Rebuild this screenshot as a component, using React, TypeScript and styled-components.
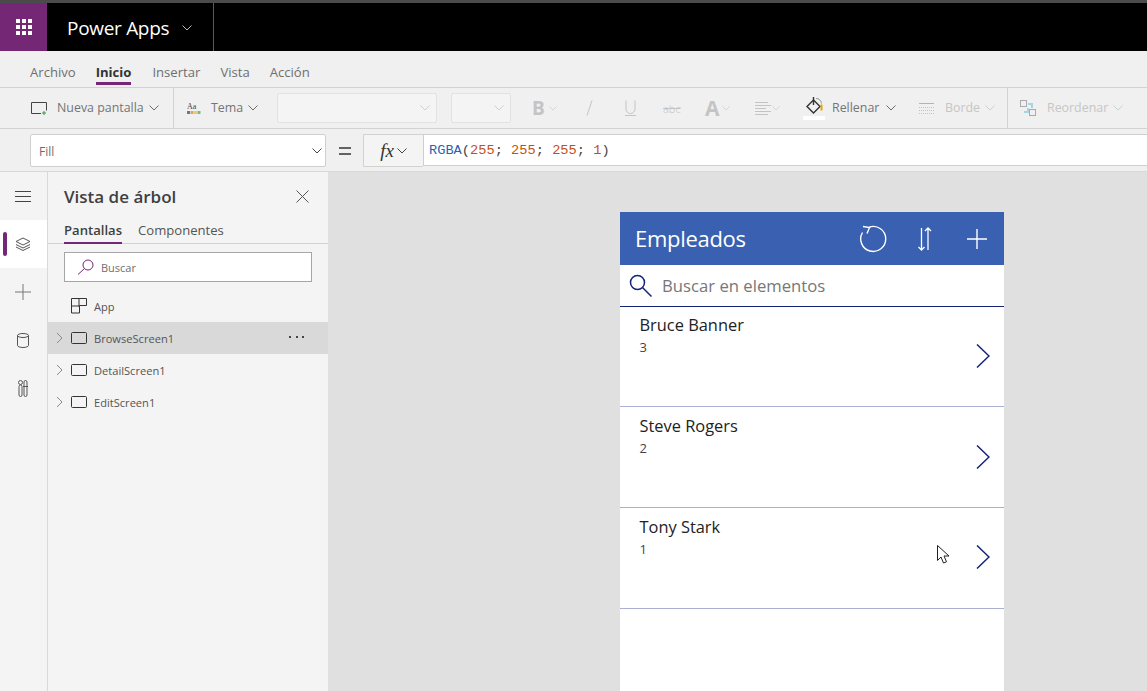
import React from "react";
import styled, { createGlobalStyle } from "styled-components";

const Global = createGlobalStyle`
  html, body { margin: 0; padding: 0; height: 100%; overflow: hidden; background: #e0e0e0; }
  #root { height: 691px; }
  * { box-sizing: border-box; }
  body { font-family: "Open Sans", "Noto Sans", "Liberation Sans", sans-serif; }
`;

const Page = styled.div`
  width: 1147px; height: 691px; display: flex; flex-direction: column; overflow: hidden; position: relative;
`;
const TopBar = styled.header`
  height: 51px; flex: none; background: #000; border-top: 3px solid #4b4b4b; display: flex; align-items: stretch;
`;
const Waffle = styled.div`
  width: 47px; background: #742774; display: flex; align-items: center; justify-content: center;
`;
const Brand = styled.div`
  width: 167px; border-right: 1px solid #5a5a5a; color: #fff; font-size: 19px; padding: 2px 0 0 20px; display: flex; align-items: center; gap: 13px;
  letter-spacing: -0.3px;
`;
const MenuBar = styled.nav`
  height: 37px; flex: none; background: #f0f0f0; border-bottom: 1px solid #d2d2d2; display: flex; align-items: center; padding-left: 30px; gap: 20px;
`;
const MenuItem = styled.div<{ $active?: boolean; $mr?: number }>`
  font-size: 13.1px; display: flex; align-items: center;
  color: ${p => (p.$active ? "#333" : "#6f6f6f")}; font-weight: ${p => (p.$active ? 700 : 400)};
  height: ${p => (p.$active ? "31px" : "100%")};
  padding-top: ${p => (p.$active ? "8px" : "6px")};
  margin-right: ${p => p.$mr ?? 0}px;
  ${p => (p.$active ? "align-self: flex-start; margin-top: 3px; border-bottom: 3px solid #742774;" : "")}
`;
const Toolbar = styled.div`
  height: 41px; flex: none; background: #f0f0f0; border-bottom: 1px solid #d2d2d2; display: flex; align-items: center; font-size: 12.4px;
`;
const ToolButton = styled.div<{ $w: number; $dim?: boolean; $pl?: number; $gap?: number; $divider?: boolean }>`
  width: ${p => p.$w}px; height: 100%; display: flex; align-items: center; flex: none;
  padding-left: ${p => p.$pl ?? 0}px; gap: ${p => p.$gap ?? 5}px;
  color: ${p => (p.$dim ? "#c6c6c6" : "#757575")};
  ${p => (p.$divider ? "border-right: 1px solid #d2d2d2;" : "")}
`;
const ToolLabel = styled.span`padding-bottom: 2px;`;
const ToolIconSlot = styled.span<{ $mr: number }>`display: flex; margin-right: ${p => p.$mr}px;`;
const Combo = styled.div<{ $w: number; $ml: number }>`
  width: ${p => p.$w}px; margin-left: ${p => p.$ml}px; height: 30px; flex: none; background: #f4f4f4; border: 1px solid #e2e2e2; border-radius: 2px;
  display: flex; align-items: center; justify-content: flex-end; padding-right: 6px;
`;
const BigLetter = styled.span<{ $size: number; $strike?: boolean }>`
  color: #c4c4c4; font-size: ${p => p.$size}px; line-height: 1; font-weight: ${p => (p.$strike ? 300 : 700)};
  ${p => (p.$strike ? "text-decoration: line-through;" : "")}
`;
const FormulaRow = styled.div`
  height: 43px; flex: none; background: #f0f0f0; border-bottom: 1px solid #d9d9d9; display: flex; align-items: flex-start; padding: 5px 0 0 30px;
`;
const PropSelect = styled.div`
  width: 296px; height: 33px; background: #fff; border: 1px solid #cfcfcf; border-radius: 2px; display: flex; align-items: center; justify-content: space-between;
  padding: 1px 3px 0 8px; font-size: 12px; color: #6d6d6d;
`;
const Equals = styled.div`
  width: 37px; height: 33px; display: flex; align-items: center; justify-content: center; color: #333;
`;
const FxButton = styled.div`
  width: 60px; height: 33px; background: #f4f4f4; border: 1px solid #d2d2d2; border-right: none; display: flex; align-items: center; justify-content: center; gap: 3px; color: #333;
  font-family: "Liberation Serif", serif; font-style: italic; font-size: 19px;
`;
const FormulaInput = styled.div`
  flex: 1; height: 32px; background: #fff; border: 1px solid #cfcfcf; border-right: none; padding-left: 5px; display: flex; align-items: center;
  font-family: "Liberation Mono", monospace; font-size: 13.68px; color: #444; white-space: pre;
`;
const Fn = styled.span`color: #2f5fb3;`;
const Num = styled.span`color: #c4500f;`;
const Main = styled.main`flex: 1; display: flex; min-height: 0;`;
const Rail = styled.aside`
  width: 48px; flex: none; background: #f4f4f4; border-right: 1px solid #d9d9d9; display: flex; flex-direction: column;
`;
const RailItem = styled.div<{ $active?: boolean }>`
  height: 48px; display: flex; align-items: center; justify-content: center; position: relative; padding-right: 1px;
  background: ${p => (p.$active ? "#fff" : "transparent")};
`;
const RailMark = styled.span`
  position: absolute; left: 3px; top: 12px; width: 4px; height: 24px; border-radius: 2px; background: #742774;
`;
const Panel = styled.section`
  width: 280px; flex: none; background: #f4f4f4; display: flex; flex-direction: column;
`;
const PanelHead = styled.div`
  height: 49px; flex: none; display: flex; align-items: center; justify-content: space-between; padding: 0 19px 1px 16px; font-size: 17px; font-weight: 600; color: #3f3f3f;
`;
const PanelTabs = styled.div`
  height: 23px; flex: none; border-bottom: 1px solid #d2d2d2; display: flex; gap: 16px; padding-left: 16px; font-size: 13.1px; color: #555;
`;
const PanelTab = styled.div<{ $active?: boolean }>`
  height: 23px; line-height: 18px; ${p => (p.$active ? "border-bottom: 2px solid #742774; font-weight: 600; color: #3f3f3f;" : "")}
`;
const PanelSearch = styled.div`
  margin: 8px 16px 0; height: 30px; flex: none; background: #fff; border: 1px solid #a6a6a6; display: flex; align-items: center; padding-left: 12px; gap: 7px; font-size: 11px; color: #6f6f6f;
`;
const TreeRow = styled.div<{ $sel?: boolean; $first?: boolean }>`
  height: 32px; flex: none; display: flex; align-items: center; padding-left: 3px; font-size: 11.1px; color: #555; position: relative;
  margin-top: ${p => (p.$first ? "8px" : "0")};
  background: ${p => (p.$sel ? "#d9d9d9" : "transparent")};
`;
const Caret = styled.span`width: 16px; display: flex; justify-content: center; flex: none; margin-right: 4px;`;
const TreeIcon = styled.span`width: 16px; display: flex; margin-right: 7px; flex: none;`;
const Dots = styled.span`
  position: absolute; right: 24px; top: 14px; display: flex; gap: 4.5px;
  & > i { width: 2px; height: 2px; background: #444; display: block; }
`;
const Canvas = styled.div`
  flex: 1; background: #e0e0e0; padding: 40px 0 0 292px; min-width: 0;
`;
const Phone = styled.div`width: 384px; background: #fff; height: 600px; position: relative;`;
const AppHeader = styled.div`
  height: 53px; background: #3a60b1; display: flex; align-items: center; color: #fff; font-size: 22px; padding-left: 15px; letter-spacing: -0.3px;
`;
const HeaderTitle = styled.span`padding-bottom: 2px;`;
const HeaderIcons = styled.div`margin-left: auto; display: flex; align-items: center; padding-right: 7px;`;
const HeaderIcon = styled.span<{ $w: number }>`width: ${p => p.$w}px; display: flex; justify-content: center;`;
const AppSearch = styled.div`
  height: 42px; border-bottom: 1px solid #13237a; display: flex; align-items: center; padding-left: 9px; gap: 10px; color: #777; font-size: 16.7px;
`;
const Row = styled.div<{ $h: number; $pt: number }>`
  height: ${p => p.$h}px; border-bottom: 1px solid #a9b0d2; padding: ${p => p.$pt}px 0 0 19.5px; position: relative;
`;
const Name = styled.div`font-size: 16.4px; line-height: 21px; color: #222; font-weight: 500;`;
const Sub = styled.div`font-size: 13px; line-height: 16px; margin-top: 4px; color: #444;`;
const RowChevron = styled.span<{ $top: number }>`position: absolute; right: 14px; top: ${p => p.$top}px; display: flex;`;
const Cursor = styled.span`position: absolute; left: 937px; top: 545px; display: flex; z-index: 5;`;

const Chev = ({ c = "#6b6b6b", s = 10 }: { c?: string; s?: number }) => (
  <svg width={s} height={s * 0.6} viewBox="0 0 10 6" fill="none"><path d="M.5.5 5 5 9.500.5" stroke={c} strokeWidth="1" /></svg>
);
const RightChev = () => (
  <svg width="7" height="12" viewBox="0 0 7 12" fill="none"><path d="M1 1l5 5-5 5" stroke="#8a8a8a" /></svg>
);
const ScreenIcon = () => (
  <svg width="16" height="12" viewBox="0 0 16 12" fill="none"><rect x=".5" y=".5" width="15" height="11" rx="1" stroke="#333" /></svg>
);
const AppGlyph = () => (
  <svg width="16" height="16" viewBox="0 0 16 16" fill="none"><path d="M.5.5h15v7h-7v7.500h-8zM.5 8h8M8 .5v8" stroke="#333" /></svg>
);

const employees = [
  { name: "Bruce Banner", id: "3", h: 100, pt: 7, top: 37 },
  { name: "Steve Rogers", id: "2", h: 101, pt: 8, top: 38 },
  { name: "Tony Stark", id: "1", h: 101, pt: 8, top: 37 },
];

function App() {
  return (
    <Page>
      <Global />
      <TopBar>
        <Waffle>
          <svg width="16" height="16" viewBox="0 0 16 16" fill="#fff">
            {[0, 6, 12].flatMap(y => [0, 6, 12].map(x => <rect key={`${x}-${y}`} x={x} y={y} width="4" height="4" />))}
          </svg>
        </Waffle>
        <Brand>Power Apps <Chev c="#bbb" /></Brand>
      </TopBar>
      <MenuBar>
        <MenuItem>Archivo</MenuItem>
        <MenuItem $active $mr={1}>Inicio</MenuItem>
        <MenuItem>Insertar</MenuItem>
        <MenuItem>Vista</MenuItem>
        <MenuItem>Acción</MenuItem>
      </MenuBar>
      <Toolbar>
        <ToolButton $w={174} $pl={31} $divider>
          <ToolIconSlot $mr={5}><svg width="16" height="13" viewBox="0 0 16 13" fill="none"><path d="M10 11.500H.5V.5h15v8" stroke="#444" /><path d="M13 9v4M11 11h4" stroke="#2e9e3e" /></svg></ToolIconSlot>
          <ToolLabel>Nueva pantalla</ToolLabel><Chev />
        </ToolButton>
        <ToolButton $w={103} $pl={13}>
          <ToolIconSlot $mr={5}><svg width="14" height="14" viewBox="0 0 14 14"><text x="0" y="8" fontSize="8" fontFamily="Liberation Serif" fill="#444">Aa</text><rect x="0" y="10" width="3" height="3" fill="#4a7fc1" /><rect x="3.500" y="10" width="3" height="3" fill="#e8a34f" /><rect x="7" y="10" width="3" height="3" fill="#e8c87f" /><rect x="10.500" y="10" width="3" height="3" fill="#7fb77f" /></svg></ToolIconSlot>
          <ToolLabel>Tema</ToolLabel><Chev />
        </ToolButton>
        <Combo $w={160} $ml={0}><Chev c="#cfcfcf" /></Combo>
        <Combo $w={60} $ml={14}><Chev c="#cfcfcf" /></Combo>
        <ToolButton $w={70} $pl={21} $gap={4}><BigLetter $size={19}>B</BigLetter><Chev c="#cfcfcf" s={8} /></ToolButton>
        <ToolButton $w={40} $pl={5} $dim>
          <svg width="7" height="16" viewBox="0 0 7 16" fill="none"><path d="M6 .5 1 15.500" stroke="#c4c4c4" /></svg>
        </ToolButton>
        <ToolButton $w={40} $pl={4}>
          <svg width="11" height="16" viewBox="0 0 11 16" fill="none"><path d="M1 .5v8.500a4.500 4.500 0 0 0 9 0V.5M0 15.500h11" stroke="#c4c4c4" /></svg>
        </ToolButton>
        <ToolButton $w={40} $pl={2} $dim><BigLetter $size={11} $strike>abc</BigLetter></ToolButton>
        <ToolButton $w={50} $pl={4} $gap={2}><BigLetter $size={21}>A</BigLetter><Chev c="#cfcfcf" s={8} /></ToolButton>
        <ToolButton $w={52} $pl={4} $gap={1}>
          <svg width="16" height="13" viewBox="0 0 16 13" fill="none"><path d="M0 .5h13M0 3.500h16M0 6.500h11M0 9.500h16M0 12.500h13" stroke="#c4c4c4" /></svg>
          <Chev c="#cfcfcf" s={8} />
        </ToolButton>
        <ToolButton $w={100} $gap={7}>
          <svg width="22" height="24" viewBox="0 0 22 24" fill="none"><path d="M4 10.500 10.500 4 17 10.500 10.500 17z" stroke="#333" strokeWidth="1.4" /><path d="M10.500 1v8" stroke="#333" strokeWidth="1.4" /><path d="M13 2.500c3 0 5 1.500 5.500 5" stroke="#999" /><path d="M18.500 8.500v6" stroke="#e5a700" strokeWidth="2" /><rect x="0" y="20" width="22" height="4" fill="#fff" /></svg>
          <ToolLabel>Rellenar</ToolLabel><Chev />
        </ToolButton>
        <ToolButton $w={105} $pl={16} $dim $divider>
          <ToolIconSlot $mr={6}><svg width="15" height="11" viewBox="0 0 15 11" fill="none"><path d="M0 .5h15" stroke="#b4b4b4" /><path d="M0 4.500h15M0 7.500h15M0 10.500h15" stroke="#c4c4c4" strokeDasharray="1 1" /></svg></ToolIconSlot>
          <ToolLabel>Borde</ToolLabel><Chev c="#cfcfcf" />
        </ToolButton>
        <ToolButton $w={130} $pl={12} $dim>
          <ToolIconSlot $mr={6}><svg width="16" height="16" viewBox="0 0 16 16" fill="none"><rect x=".5" y=".5" width="6" height="6" stroke="#aaa" /><rect x="9.500" y="9.500" width="6" height="6" stroke="#aaa" /><path d="M4 12h4V8M8 4h4v4" stroke="#a6d3e6" strokeWidth="2" /></svg></ToolIconSlot>
          <ToolLabel>Reordenar</ToolLabel><Chev c="#cfcfcf" />
        </ToolButton>
      </Toolbar>
      <FormulaRow>
        <PropSelect>Fill <Chev c="#444" /></PropSelect>
        <Equals><svg width="12" height="8" viewBox="0 0 12 8"><path d="M0 1h12M0 7h12" stroke="#333" strokeWidth="1.6" /></svg></Equals>
        <FxButton>fx <Chev c="#444" /></FxButton>
        <FormulaInput>
          <Fn>RGBA</Fn>(<Num>255</Num>; <Num>255</Num>; <Num>255</Num>; <Num>1</Num>)
        </FormulaInput>
      </FormulaRow>
      <Main>
        <Rail>
          <RailItem>
            <svg width="16" height="11" viewBox="0 0 16 11" fill="none"><path d="M0 .5h16M0 5.500h16M0 10.500h16" stroke="#444" /></svg>
          </RailItem>
          <RailItem $active>
            <RailMark />
            <svg width="16" height="16" viewBox="0 0 16 16" fill="none" stroke="#555"><path d="M8 2 15 5.500 8 9 1 5.500zM1 8.500 8 12l7-3.500M1 11 8 14.500 15 11" /></svg>
          </RailItem>
          <RailItem>
            <svg width="16" height="16" viewBox="0 0 16 16" fill="none"><path d="M8 0v16M0 8h16" stroke="#777" /></svg>
          </RailItem>
          <RailItem>
            <svg width="12" height="15" viewBox="0 0 12 15" fill="none" stroke="#555"><ellipse cx="6" cy="2.500" rx="5.500" ry="2" /><path d="M.5 2.500v10c0 1 2.500 2 5.500 2s5.500-1 5.500-2v-10" /></svg>
          </RailItem>
          <RailItem>
            <svg width="10" height="17" viewBox="0 0 10 17" fill="none" stroke="#555"><circle cx="2.500" cy="2.500" r="2" /><rect x="1" y="5" width="3" height="11.500" rx="1.500" /><rect x="6" y=".5" width="3" height="16" rx="1.500" /><path d="M5 6.500h5" /></svg>
          </RailItem>
        </Rail>
        <Panel>
          <PanelHead>
            Vista de árbol
            <svg width="13" height="13" viewBox="0 0 13 13" fill="none"><path d="M.5.5l12 12M12.500.5l-12 12" stroke="#555" /></svg>
          </PanelHead>
          <PanelTabs>
            <PanelTab $active>Pantallas</PanelTab>
            <PanelTab>Componentes</PanelTab>
          </PanelTabs>
          <PanelSearch>
            <svg width="17" height="16" viewBox="0 0 17 16" fill="none" stroke="#742774"><circle cx="11" cy="6" r="5" /><path d="M7.500 9.500 1 15.500" /></svg>
            Buscar
          </PanelSearch>
          <TreeRow $first>
            <Caret />
            <TreeIcon><AppGlyph /></TreeIcon>App
          </TreeRow>
          {["BrowseScreen1", "DetailScreen1", "EditScreen1"].map((n, i) => (
            <TreeRow key={n} $sel={i === 0}>
              <Caret><RightChev /></Caret>
              <TreeIcon><ScreenIcon /></TreeIcon>{n}
              {i === 0 && <Dots><i /><i /><i /></Dots>}
            </TreeRow>
          ))}
        </Panel>
        <Canvas>
          <Phone>
            <AppHeader>
              <HeaderTitle>Empleados</HeaderTitle>
              <HeaderIcons>
                <HeaderIcon $w={40}>
                  <svg width="28" height="28" viewBox="0 0 28 28" fill="none" stroke="#fff" strokeWidth="1.4"><path d="M10.500 2A12.500 12.500 0 1 1 3.500 7.500" /><path d="M4 1.500l6.500 1L8 8.500" /></svg>
                </HeaderIcon>
                <HeaderIcon $w={63}>
                  <svg width="16" height="24" viewBox="0 0 16 24" fill="none" stroke="#fff" strokeWidth="1.3"><path d="M4.500 1v22M1.500 20l3 3 3-3M11 23V1M8 4l3-3 3 3" /></svg>
                </HeaderIcon>
                <HeaderIcon $w={41}>
                  <svg width="20" height="20" viewBox="0 0 20 20" fill="none" stroke="#fff" strokeWidth="1.4"><path d="M10 0v20M0 10h20" /></svg>
                </HeaderIcon>
              </HeaderIcons>
            </AppHeader>
            <AppSearch>
              <svg width="23" height="23" viewBox="0 0 23 23" fill="none" stroke="#13237a" strokeWidth="1.5"><circle cx="8.500" cy="8.500" r="7" /><path d="m13.500 13.500 9 9" /></svg>
              Buscar en elementos
            </AppSearch>
            {employees.map(e => (
              <Row key={e.name} $h={e.h} $pt={e.pt}>
                <Name>{e.name}</Name>
                <Sub>{e.id}</Sub>
                <RowChevron $top={e.top}>
                  <svg width="14" height="24" viewBox="0 0 14 24" fill="none" stroke="#13237a" strokeWidth="1.5"><path d="M1 .5 13 12 1 23.500" /></svg>
                </RowChevron>
              </Row>
            ))}
          </Phone>
        </Canvas>
      </Main>
      <Cursor>
        <svg width="13" height="20" viewBox="0 0 13 20" fill="#fff" stroke="#222"><path d="M.5.5v15l3.500-3.500 2.500 6 3-1.200-2.500-5.800h5z" /></svg>
      </Cursor>
    </Page>
  );
}

export default App;
